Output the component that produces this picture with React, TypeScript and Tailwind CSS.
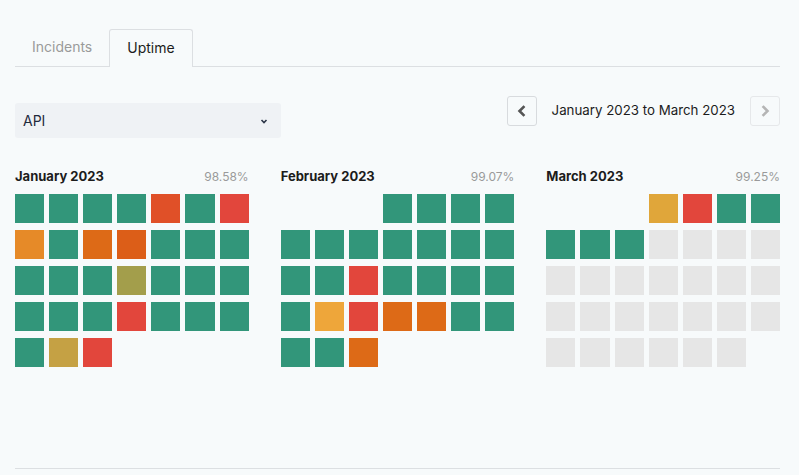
const G = 'bg-[#32967a]'
const R = 'bg-[#e2463c]'
const RO = 'bg-[#e05028]'
const O = 'bg-[#e68a28]'
const DO = 'bg-[#dd6a17]'
const DO2 = 'bg-[#dc5e18]'
const OL = 'bg-[#a39e4b]'
const MU = 'bg-[#c5a144]'
const YO = 'bg-[#eea63a]'
const Y = 'bg-[#e0a63a]'
const E = 'bg-[#e6e6e6]'

type Month = { name: string; pct: string; offset: number; days: string[] }

const months: Month[] = [
  {
    name: 'January 2023',
    pct: '98.58%',
    offset: 0,
    days: [
      G, G, G, G, RO, G, R,
      O, G, DO, DO2, G, G, G,
      G, G, G, OL, G, G, G,
      G, G, G, R, G, G, G,
      G, MU, R,
    ],
  },
  {
    name: 'February 2023',
    pct: '99.07%',
    offset: 3,
    days: [
      G, G, G, G,
      G, G, G, G, G, G, G,
      G, G, R, G, G, G, G,
      G, YO, R, DO, DO, G, G,
      G, G, DO,
    ],
  },
  {
    name: 'March 2023',
    pct: '99.25%',
    offset: 3,
    days: [
      Y, R, G, G,
      G, G, G, E, E, E, E,
      E, E, E, E, E, E, E,
      E, E, E, E, E, E, E,
      E, E, E, E, E, E,
    ],
  },
]

const MonthGrid = ({ month }: { month: Month }) => (
  <div>
    <div className="flex items-baseline justify-between h-[20px] mt-[3px]">
      <h3 className="text-[13px] font-bold text-[#1c1c1c]">{month.name}</h3>
      <span className="text-[12px] text-[#9a9a9a]">{month.pct}</span>
    </div>
    <div className="grid grid-cols-7 gap-x-[5px] gap-y-[7px] mt-[7px]">
      {Array.from({ length: month.offset }).map((_, i) => (
        <div key={`e${i}`} className="h-[29px]" />
      ))}
      {month.days.map((c, i) => (
        <div key={i} className={`h-[29px] ${c}`} />
      ))}
    </div>
  </div>
)

const Chevron = ({ dir, color }: { dir: 'left' | 'right'; color: string }) => (
  <svg width="12" height="12" viewBox="0 0 12 12" fill="none">
    <path
      d={dir === 'left' ? 'M7.5 2 L3.5 6 L7.5 10' : 'M4.5 2 L8.5 6 L4.5 10'}
      stroke={color}
      strokeWidth="2.6"
      strokeLinecap="square"
      strokeLinejoin="miter"
    />
  </svg>
)

export default function App() {
  return (
    <div className="min-h-[475px] w-full bg-[#f7fafb] font-['Inter',sans-serif]">
      <div className="ml-[15px] w-[765px] pt-[29px]">
        <div className="flex border-b border-[#dcdfe2] h-[38px]">
          <button className="px-[17px] pb-[2px] text-[14px] text-[#9a9a9a]">Incidents</button>
          <button className="px-[17px] pb-[2px] text-[14px] text-[#1c1c1c] border border-b-0 border-[#dcdfe2] rounded-t-[3px] bg-[#f7fafb] -mb-px h-[38px]">
            Uptime
          </button>
        </div>

        <div className="flex justify-between items-start mt-[28px]">
          <div className="mt-[8px] w-[266px] h-[35px] bg-[#eff2f5] rounded-[3px] flex items-center justify-between pl-[8px] pr-[12px]">
            <span className="text-[14px] text-[#1f2a3c]">API</span>
            <svg width="10" height="10" viewBox="0 0 10 10" fill="none">
              <path d="M2.5 4 L5 6.5 L7.5 4" stroke="#2b3547" strokeWidth="1.6" />
            </svg>
          </div>
          <div className="flex items-center gap-[15px] mt-px">
            <button className="w-[30px] h-[30px] border border-[#d8dbde] rounded-[3px] flex items-center justify-center">
              <Chevron dir="left" color="#555555" />
            </button>
            <span className="text-[13.3px] text-[#1c1c1c]">January 2023 to March 2023</span>
            <button className="w-[30px] h-[30px] border border-[#e6e8ea] rounded-[3px] flex items-center justify-center">
              <Chevron dir="right" color="#b5b5b5" />
            </button>
          </div>
        </div>

        <div className="grid grid-cols-3 gap-8 mt-[26px]">
          {months.map((m) => (
            <MonthGrid key={m.name} month={m} />
          ))}
        </div>

        <div className="border-b border-[#dcdfe2] mt-[101px]" />
      </div>
    </div>
  )
}
